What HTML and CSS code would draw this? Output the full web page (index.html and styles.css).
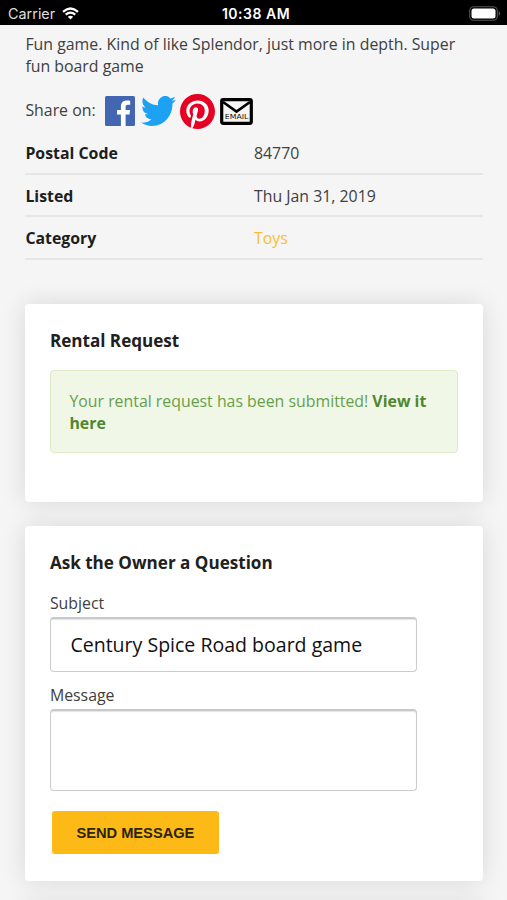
FILE: index.html
```html
<!DOCTYPE html>
<html lang="en">
<head>
<meta charset="utf-8">
<meta name="viewport" content="width=device-width">
<title>Century Spice Road board game</title>
<link rel="stylesheet" href="styles.css">
</head>
<body>
<header class="status">
  <div class="status-left"><span>Carrier</span>
    <svg class="wifi" viewBox="0 0 17 13" aria-hidden="true"><g fill="none" stroke="#fff" stroke-width="2.2"><path d="M1 4.8Q8.500-1.800 16 4.800"/><path d="M3.700 7.700Q8.500 3.600 13.300 7.700"/></g><path d="M8.500 12.500L5.800 9.700Q8.500 7.600 11.200 9.700Z" fill="#fff"/></svg>
  </div>
  <div class="status-time">10:38 AM</div>
  <svg class="battery" viewBox="0 0 32 15" aria-hidden="true"><rect x=".7" y=".7" width="27.600" height="13.600" rx="4" fill="none" stroke="#555" stroke-width="1.100"/><rect x="2.500" y="2.500" width="24" height="10" rx="2.500" fill="#fff"/><path d="M29.700 5v5q1.500-.7 1.500-2.500T29.700 5z" fill="#555"/></svg>
</header>
<main class="page">
  <p class="description">Fun game. Kind of like Splendor, just more in depth. Super fun board game</p>
  <div class="share">
    <span class="share-label">Share on:</span>
    <svg class="facebook" viewBox="0 0 30 30" role="img" aria-label="Facebook"><rect width="30" height="30" rx="1.500" fill="#4266b2"/><path d="M20.600 30V18.400h3.900l.6-4.500h-4.500V11c0-1.300.4-2.200 2.200-2.200h2.400v-4c-.4-.1-1.800-.2-3.500-.2-3.500 0-5.800 2.100-5.800 6v3.300H12v4.500h3.900V30z" fill="#fff"/></svg>
    <svg class="twitter" viewBox="0 2.200 24 19.600" preserveAspectRatio="none" role="img" aria-label="Twitter"><path fill="#1da1f2" d="M23.953 4.570a10 10 0 01-2.825.775 4.958 4.958 0 002.163-2.723c-.951.555-2.005.959-3.127 1.184a4.920 4.920 0 00-8.384 4.482C7.690 8.095 4.067 6.130 1.640 3.162a4.822 4.822 0 00-.666 2.475c0 1.710.870 3.213 2.188 4.096a4.904 4.904 0 01-2.228-.616v.060a4.923 4.923 0 003.946 4.827 4.996 4.996 0 01-2.212.085 4.936 4.936 0 004.604 3.417 9.867 9.867 0 01-6.102 2.105c-.390 0-.779-.023-1.170-.067a13.995 13.995 0 007.557 2.209c9.053 0 13.998-7.496 13.998-13.985 0-.210 0-.420-.015-.630A9.935 9.935 0 0024 4.590z"/></svg>
    <svg class="pinterest" viewBox="0 0 24 24" role="img" aria-label="Pinterest"><circle cx="12" cy="12" r="11.300" fill="#fff"/><path fill="#e60023" d="M12 0C5.373 0 0 5.372 0 12c0 5.084 3.163 9.426 7.627 11.174-.105-.949-.200-2.405.042-3.441.218-.937 1.407-5.965 1.407-5.965s-.359-.719-.359-1.782c0-1.668.967-2.914 2.171-2.914 1.023 0 1.518.769 1.518 1.690 0 1.029-.655 2.568-.994 3.995-.283 1.194.599 2.169 1.777 2.169 2.133 0 3.772-2.249 3.772-5.495 0-2.873-2.064-4.882-5.012-4.882-3.414 0-5.418 2.561-5.418 5.207 0 1.031.397 2.138.893 2.738a.360.360 0 01.083.345l-.333 1.360c-.053.220-.174.267-.402.161-1.499-.698-2.436-2.889-2.436-4.649 0-3.785 2.750-7.262 7.929-7.262 4.163 0 7.398 2.967 7.398 6.931 0 4.136-2.607 7.464-6.227 7.464-1.216 0-2.359-.631-2.750-1.378l-.748 2.853c-.271 1.043-1.002 2.350-1.492 3.146C9.570 23.812 10.763 24 12 24c6.627 0 12-5.373 12-12 0-6.628-5.373-12-12-12z"/></svg>
    <svg class="email" viewBox="0 0 33 27" role="img" aria-label="Email"><rect x="1.700" y="1.700" width="29.600" height="23.600" rx="1.500" fill="none" stroke="#000" stroke-width="3.200"/><path d="M3 4L16.500 13.600 30 4" fill="none" stroke="#000" stroke-width="2.700"/><text x="4.800" y="21.300" textLength="23.500" lengthAdjust="spacingAndGlyphs" class="email-text">EMAIL</text></svg>
  </div>
  <dl class="details">
    <div class="detail"><dt>Postal Code</dt><dd>84770</dd></div>
    <div class="detail"><dt>Listed</dt><dd>Thu Jan 31, 2019</dd></div>
    <div class="detail"><dt>Category</dt><dd><a href="#">Toys</a></dd></div>
  </dl>
  <section class="card rental">
    <h2>Rental Request</h2>
    <div class="alert">Your rental request has been submitted! <a href="#">View it here</a></div>
  </section>
  <section class="card question">
    <h2>Ask the Owner a Question</h2>
    <form>
      <label for="subject">Subject</label>
      <input id="subject" type="text" value="Century Spice Road board game">
      <label for="message">Message</label>
      <textarea id="message"></textarea>
      <button type="button">SEND MESSAGE</button>
    </form>
  </section>
  <section class="card next"></section>
</main>
</body>
</html>
```
FILE: styles.css
```css
* { box-sizing: border-box; }
html { overflow: hidden; }
body {
  margin: 0;
  height: 900px;
  overflow: hidden;
  background: #f5f5f5;
  color: #404040;
  font: 15.870px/22px "Open Sans", sans-serif;
}
a { color: inherit; text-decoration: none; }
.status {
  display: grid;
  grid-template-columns: 1fr auto 1fr;
  align-items: center;
  height: 25px;
  padding: 2px 6px 0 8px;
  background: #000;
  color: #fff;
  font: 14.4px/20px Inter, sans-serif;
}
.status-left { display: flex; align-items: center; gap: 7px; color: #ddd; }
.wifi { width: 17px; height: 13px; }
.status-time { font-weight: 600; font-size: 14px; letter-spacing: .5px; margin-left: 3px; }
.battery { width: 32px; height: 15px; justify-self: end; }
.page { height: 875px; overflow: hidden; padding: 8px 24.500px 0 25.400px; }
.description { margin: 0; height: 44px; }
.share { display: flex; align-items: center; height: 54px; padding-top: 14px; }
.share-label { width: 79.600px; margin-bottom: 2px; }
.facebook { width: 30px; height: 30px; }
.twitter { width: 35px; height: 30px; margin-left: 6px; }
.pinterest { width: 35px; height: 35px; margin-left: 4.500px; }
.email { width: 33px; height: 27px; margin-left: 5px; }
.email-text { font: 6.800px "DejaVu Sans", sans-serif; fill: #111; }
.details { margin: 0; }
.detail {
  display: grid;
  grid-template-columns: 1fr 1fr;
  height: 42.700px;
  padding-top: 11px;
  border-bottom: 2px solid #e6e6e6;
}
.detail:first-child { height: 43.700px; }
.detail + .detail { padding-top: 10.300px; }
.detail:last-child { padding-top: 9.800px; }
dt { color: #1d1d1d; font-weight: 700; }
dd { margin: 0; }
dd a { color: #fcbd36; }
.card {
  padding: 25px 24.500px;
  border-radius: 4px;
  background: #fff;
  box-shadow: 0 0 25px rgba(0, 0, 0, .12);
}
.card h2 { margin: 0; color: #202020; font-size: 17.080px; line-height: 24px; font-weight: 700; }
.rental { height: 198px; margin-top: 44px; }
.alert {
  height: 83px;
  margin-top: 17px;
  padding: 19px 18px 19px 18.500px;
  border: 1px solid #dfebc6;
  border-radius: 4px;
  background: #f0f7e7;
  color: #689f49;
}
.alert a { color: #50872d; font-weight: 700; }
.question { height: 355px; margin-top: 24px; }
.question form { display: flex; flex-direction: column; align-items: flex-start; padding-top: 17px; }
label { height: 25px; }
input, textarea {
  display: block;
  width: 367px;
  margin: 0;
  border: 1.500px solid #ccc;
  border-top: 2px solid #c8c8c8;
  border-radius: 4px;
  background: #fff;
  box-shadow: inset 0 1px 1px rgba(0, 0, 0, .1);
  outline: 0;
}
input {
  height: 54.500px;
  margin-bottom: 12.500px;
  padding: 0 19.500px 1px;
  color: #111;
  font: 19.550px "Open Sans", sans-serif;
}
textarea { height: 82px; resize: none; }
button {
  width: 167px;
  height: 43px;
  margin: 20px 0 0 2px;
  padding: 0;
  border: 0;
  border-radius: 3px;
  background: #fdb915;
  color: #2b240f;
  font: bold 14.650px "Liberation Sans", sans-serif;
}
.next { height: 100px; margin-top: 24px; }
```
